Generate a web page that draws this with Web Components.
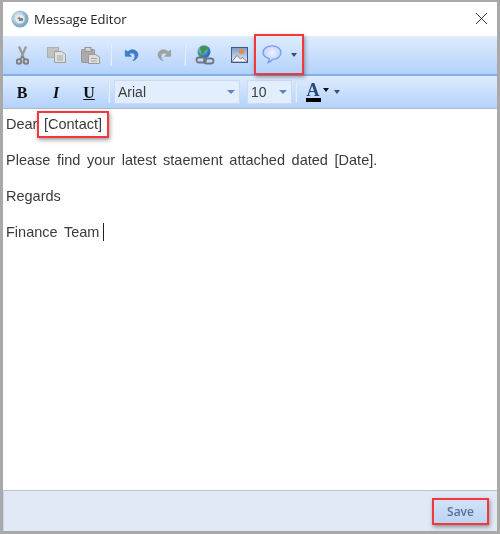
<!DOCTYPE html>
<html><head><meta charset="utf-8"><title>Message Editor</title>
<style>
html,body{margin:0;padding:0;background:#fff}
body{width:500px;height:534px;overflow:hidden}
</style></head><body>
<message-editor></message-editor>
<template id="tb"><style>
:host{display:flex;align-items:center;height:var(--h,38px);box-sizing:border-box;padding-left:var(--pl,3px);background:linear-gradient(#dfecfd,#b3d2fb);flex:none}
</style><slot></slot></template>
<template id="ib"><style>
:host{display:flex;align-items:center;justify-content:center;width:var(--w,34px);height:30px;flex:none}
svg{display:block}
</style><slot></slot></template>
<script>
const def=(n,tpl)=>customElements.define(n,class extends HTMLElement{
 constructor(){super();const s=this.attachShadow({mode:'open'});
  if(tpl[0]==='#')s.append(document.querySelector(tpl).content.cloneNode(true));else s.innerHTML=tpl;}
});
def('tool-bar','#tb');
def('icon-btn','#ib');
def('tool-sep',`<style>:host{display:block;width:2px;height:22px;background:linear-gradient(90deg,#c3d9f6,#eef5fe);margin:0 var(--m,8px);flex:none}</style>`);
def('drop-caret',`<style>:host{display:block;width:0;height:0;border-left:3.5px solid transparent;border-right:3.5px solid transparent;border-top:4px solid #2d4f86;flex:none}</style>`);
def('combo-box',`<style>
:host{display:flex;align-items:center;box-sizing:border-box;height:24px;background:#e3eefc;border:1px solid #c9dbf2;padding:0 4px 0 3px;font:14px "Liberation Sans",Arial,sans-serif;color:#3c3c3c;flex:none}
span{flex:1}
i{display:block;width:0;height:0;border-left:4px solid transparent;border-right:4px solid transparent;border-top:4px solid #5f86b8}
</style><span><slot></slot></span><i></i>`);
def('red-mark',`<style>
:host{display:inline-flex;align-items:center;box-sizing:border-box;border:2.5px solid #f2383c;box-shadow:1px 2px 4px rgba(60,60,60,.5)}
</style><slot></slot>`);
def('title-bar',`<style>
:host{display:flex;align-items:center;height:34px;background:#fff;flex:none;padding-left:8px;font:13px "Open Sans","Noto Sans",sans-serif;color:#222}
.ic{margin-right:5px;display:block}
.t{flex:1}
.x{margin:0 9px 2px 0;display:block}
</style>
<svg class="ic" width="18" height="18" viewBox="0 0 18 18"><defs><radialGradient id="d" cx=".4" cy=".4"><stop offset="0" stop-color="#f4f4f4"/><stop offset=".55" stop-color="#b9d2dd"/><stop offset="1" stop-color="#7fa9c6"/></radialGradient></defs><circle cx="9" cy="9" r="8.6" fill="url(#d)"/><circle cx="9" cy="9" r="4.6" fill="#e8e8ea"/><path d="M6 8.5l3-2v1.5h3v3H8v-1.5z" fill="#7a8691"/></svg>
<span class="t"><slot></slot></span>
<svg class="x" width="13" height="13" viewBox="0 0 13 13"><path d="M1 1l11 11M12 1L1 12" stroke="#333" stroke-width="1" fill="none"/></svg>`);
def('editor-pane',`<style>
:host{display:flex;flex-direction:column;gap:18px;flex:1;background:#fff;padding:6px 3px 0;box-sizing:border-box;border-top:1px solid #b6bcc4;font:14.5px/18px "Liberation Sans",Arial,sans-serif;color:#3a3a3a;word-spacing:2.6px}
div{height:18px;display:flex;align-items:center;white-space:pre}
.caret{display:inline-block;width:1px;height:18px;background:#222;margin-left:4px}
red-mark{height:27px;padding:0 4.5px;margin-left:-6.6px;word-spacing:0}
</style><slot></slot>
<div>Dear <red-mark>[Contact]</red-mark></div>
<div>Please find your latest staement attached dated [Date].</div>
<div>Regards</div>
<div>Finance Team<span class="caret"></span></div>`);
def('foot-bar',`<style>
:host{display:flex;align-items:center;justify-content:flex-end;height:41px;flex:none;box-sizing:border-box;background:#e1e9f7;border-top:1px solid #bcc2ca;border-left:1px solid #c7d6ea;padding:0 8px 0 0}
red-mark{width:57px;height:27px;justify-content:center;background:linear-gradient(#d3e2f7,#bcd4f2);font:600 12px "Open Sans","Noto Sans",sans-serif;color:#54709f;margin-top:1px}
</style><red-mark><slot></slot></red-mark>`);
const cut=`<svg width="13" height="19" viewBox="0 0 13 19"><path d="M3 .5l4.500 10.500M10 .5L5.500 11" stroke="#999" stroke-width="2.200" fill="none"/><circle cx="3" cy="15.500" r="2.300" fill="none" stroke="#7f7f7f" stroke-width="2"/><circle cx="10" cy="15.500" r="2.300" fill="none" stroke="#7f7f7f" stroke-width="2"/><path d="M6.500 10.500L4 13.500M6.500 10.500L9 13.500" stroke="#7f7f7f" stroke-width="1.800"/></svg>`;
const copy=`<svg width="19" height="16" viewBox="0 0 19 16"><rect x=".5" y=".5" width="11" height="10" fill="#c2c2c2" stroke="#adadad"/><path d="M7.500 4.500h7l4 3v8h-11z" fill="#e0e0e0" stroke="#9f9f9f"/><path d="M10 9h6M10 11h6M10 13h6" stroke="#a6a6a6"/></svg>`;
const paste=`<svg width="19" height="17" viewBox="0 0 19 17"><rect x=".5" y="2.500" width="13" height="13" rx="1" fill="#ababab" stroke="#969696"/><rect x="4" y=".5" width="6" height="4" fill="#d3d3d3" stroke="#969696"/><path d="M7.500 7.500h7l4 2.500v6.500h-11z" fill="#dedede" stroke="#9a9a9a"/><path d="M10 11.500h6M10 14h6" stroke="#a6a6a6"/></svg>`;
const ud=`M1.500 3v7h7L5.800 7.400C8 5.500 11.500 6 12.300 9c.5 2-.3 4-2.300 6 3.500-1 6.200-3.800 5.800-7.600C15.200 3 9 .6 4.400 4.800z`;
const undo=`<svg width="15" height="16" viewBox="0 0 17 17"><path d="${ud}" fill="#3b7fd0" stroke="#2a62ad" stroke-width=".6"/></svg>`;
const redo=`<svg width="15" height="16" viewBox="0 0 17 17"><g transform="matrix(-1 0 0 1 17 0)"><path d="${ud}" fill="#a3a3a3" stroke="#8c8c8c" stroke-width=".6"/></g></svg>`;
const globe=`<svg width="20" height="20" viewBox="0 0 20 20"><defs><radialGradient id="gl" cx=".4" cy=".35"><stop offset="0" stop-color="#a9e0ee"/><stop offset="1" stop-color="#2a6fc0"/></radialGradient></defs><circle cx="9" cy="6.800" r="6.500" fill="url(#gl)"/><path d="M5.500 1.500c3-1 6-.5 7 1.500-1 3-3 2-3 5-2 2-4 0-3.500-2C5 5 4.500 3.500 5.500 1.500z" fill="#3f9a3c"/><path d="M3 8c1 0 3 1 3 3 0 1-1 1-1 1-1-1-2-2-2-4z" fill="#4aa644"/><g fill="none" stroke="#6e7680" stroke-width="1.800"><rect x="1.500" y="12.500" width="9.500" height="5" rx="2.500"/><rect x="9" y="13.500" width="9.500" height="5" rx="2.500"/></g></svg>`;
const pic=`<svg width="17" height="16" viewBox="0 0 17 16"><defs><linearGradient id="sk" x1="0" y1="0" x2="0" y2="1"><stop offset="0" stop-color="#7d9cc8"/><stop offset="1" stop-color="#e8eef6"/></linearGradient></defs><rect x=".5" y=".5" width="16" height="15" fill="url(#sk)" stroke="#3c5a8a"/><circle cx="10.500" cy="4.500" r="2.600" fill="#ef8a3c"/><path d="M1 14.500l5-6 3.500 3.500 2-1.500 4.500 4v.500H1z" fill="#f6f6f8" stroke="#4a5f80" stroke-width=".7"/></svg>`;
const bub=`<svg width="20" height="19" viewBox="0 0 20 19"><defs><radialGradient id="bb" cx=".5" cy=".42" r=".6"><stop offset="0" stop-color="#eef3fe"/><stop offset=".65" stop-color="#c9d9fb"/><stop offset="1" stop-color="#9bb5f3"/></radialGradient></defs><path d="M10 .8c5 0 9 2.800 9 6.700s-4 7-8.500 6.800c-1 1.400-2.500 2.800-4.500 3.300.9-1.200 1.300-2.500 1.200-4C3.500 12.400 1 10.200 1 7.500 1 3.600 5 .8 10 .8z" fill="url(#bb)" stroke="#7a9bee" stroke-width="1.300"/></svg>`;
customElements.define('message-editor',class extends HTMLElement{
 constructor(){super();const s=this.attachShadow({mode:'open'});
 s.innerHTML=`<style>
 :host{display:flex;flex-direction:column;box-sizing:border-box;width:500px;height:534px;border:solid #a9a9a9;border-width:2px 3px 3px 3px;background:#fff;filter:blur(.4px)}
 .fmt{font:bold 16px "Liberation Serif",serif;color:#111;padding-top:1px;box-sizing:border-box}
 .mark{height:41px;margin:-2px 0 -1px -3px;padding:0 0 0 4px;width:50px;gap:2px;flex:none;position:relative;z-index:1}
 .a{display:flex;flex-direction:column;align-items:center;font:bold 18px/14px "Liberation Serif",serif;color:#26477d;width:15px}
 .a b{display:block;width:15px;height:4px;background:#000;margin-top:1px}
 .row2{--h:34px;border-top:2px solid #84aee6}
 </style>
 <title-bar>Message Editor</title-bar>
 <tool-bar style="--h:38px;--pl:2px">
  <icon-btn>${cut}</icon-btn><icon-btn>${copy}</icon-btn><icon-btn>${paste}</icon-btn>
  <tool-sep style="--m:3px"></tool-sep>
  <icon-btn style="--w:32px">${undo}</icon-btn><icon-btn>${redo}</icon-btn>
  <tool-sep style="--m:3px"></tool-sep>
  <icon-btn style="--w:32px">${globe}</icon-btn><icon-btn style="--w:36px">${pic}</icon-btn>
  <red-mark class="mark"><icon-btn style="--w:24px">${bub}</icon-btn><drop-caret style="margin-left:5px"></drop-caret></red-mark>
 </tool-bar>
 <tool-bar class="row2">
  <icon-btn class="fmt" style="margin-left:-1px">B</icon-btn><icon-btn class="fmt" style="font-style:italic">I</icon-btn><icon-btn class="fmt" style="text-decoration:underline;--w:32px">U</icon-btn>
  <tool-sep style="--m:3px"></tool-sep>
  <combo-box style="width:126px;margin-left:1px">Arial</combo-box>
  <combo-box style="width:45px;margin-left:7px">10</combo-box>
  <tool-sep style="--m:3px"></tool-sep>
  <icon-btn style="--w:28px;margin-left:3px"><span class="a">A<b></b></span><drop-caret style="border-top-color:#111;margin:0 0 4px 2px"></drop-caret></icon-btn>
  <drop-caret style="margin-left:3px"></drop-caret>
 </tool-bar>
 <editor-pane></editor-pane>
 <foot-bar>Save</foot-bar>`;
 }
});
</script>
</body></html>
